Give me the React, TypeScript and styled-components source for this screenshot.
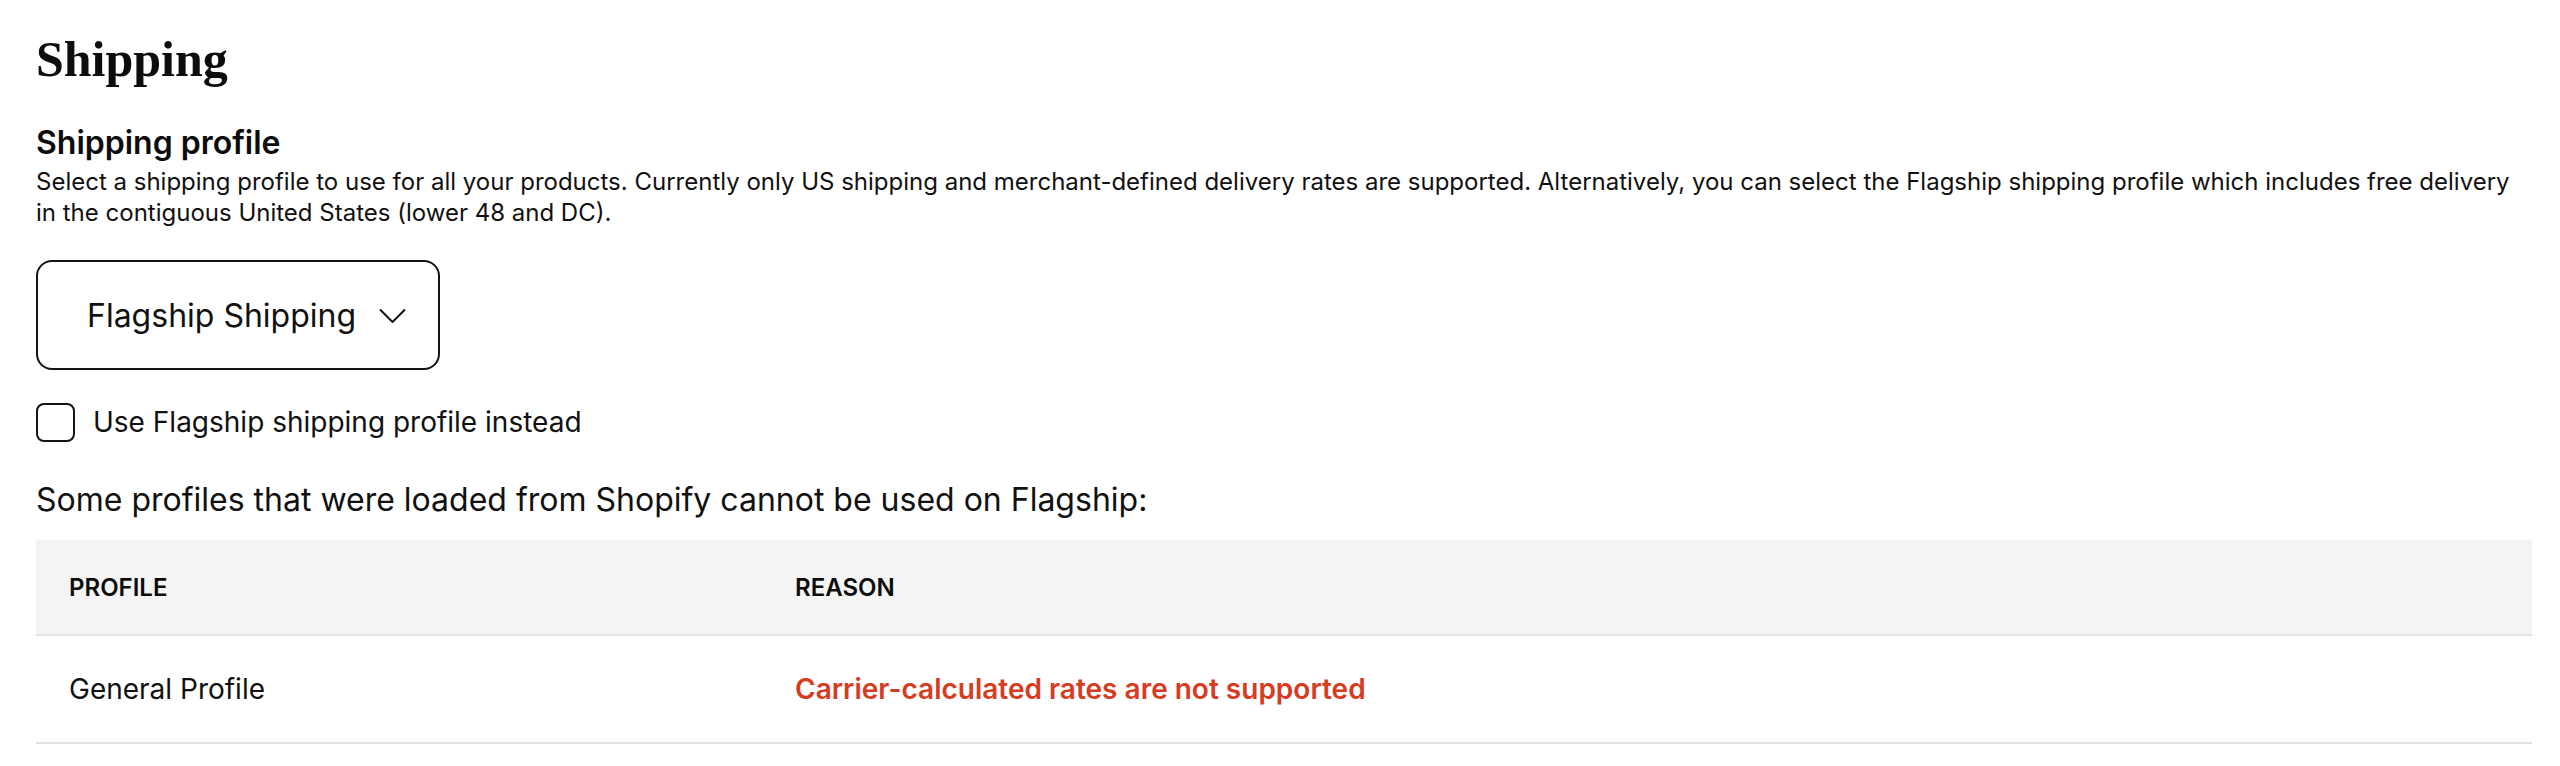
import React from 'react'
import styled, { createGlobalStyle } from 'styled-components'

const GlobalStyle = createGlobalStyle`
  html, body {
    margin: 0;
    padding: 0;
    background: #ffffff;
    color: #111111;
    font-family: Inter, "Noto Sans", "Liberation Sans", sans-serif;
  }
  * {
    box-sizing: border-box;
  }
`

const Page = styled.div`
  padding: 29px 28px 0 36px;
`

const Title = styled.h1`
  margin: 0 0 36px;
  font-family: "Liberation Serif", "DejaVu Serif", serif;
  font-weight: 700;
  font-size: 50px;
  line-height: 60px;
  color: #0d0d0d;
`

const SectionTitle = styled.h2`
  margin: 0 0 5px;
  font-size: 32px;
  line-height: 36px;
  font-weight: 600;
  color: #0d0d0d;
`

const Help = styled.p`
  margin: 0 0 32px;
  font-size: 24px;
  line-height: 31px;
  color: #111111;
`

const SelectButton = styled.button`
  display: inline-flex;
  align-items: center;
  gap: 23px;
  height: 110px;
  padding: 0 32px 0 49px;
  border: 2px solid #141414;
  border-radius: 16px;
  background: #ffffff;
  font-family: inherit;
  font-size: 32px;
  color: #111111;
  cursor: pointer;
`

const Chevron = styled.svg`
  width: 27px;
  height: 15px;
  flex: none;
`

const CheckRow = styled.label`
  display: flex;
  align-items: center;
  gap: 18px;
  margin-top: 33px;
  font-size: 28px;
  line-height: 39px;
  color: #111111;
`

const CheckBox = styled.span`
  width: 39px;
  height: 39px;
  border: 2px solid #141414;
  border-radius: 8px;
  flex: none;
`

const Notice = styled.p`
  margin: 38px 0 20px;
  font-size: 32px;
  line-height: 40px;
  color: #111111;
`

const Table = styled.div`
  display: grid;
  grid-template-columns: 726px 1fr;
`

const HeadCell = styled.div`
  display: flex;
  align-items: center;
  height: 96px;
  padding-left: 33px;
  background: #f4f4f4;
  border-bottom: 2px solid #e3e3e3;
  font-size: 24px;
  font-weight: 600;
  text-transform: uppercase;
  color: #0d0d0d;
`

const Cell = styled.div<{ $error?: boolean }>`
  display: flex;
  align-items: center;
  height: 108px;
  padding-left: 33px;
  border-bottom: 2px solid #e3e3e3;
  font-size: 28px;
  font-weight: ${p => (p.$error ? 600 : 400)};
  color: ${p => (p.$error ? '#d63c1f' : '#111111')};
`

const rows = [
  { profile: 'General Profile', reason: 'Carrier-calculated rates are not supported' },
]

const App = () => {
  return (
    <Page>
      <GlobalStyle />
      <Title>Shipping</Title>
      <SectionTitle>Shipping profile</SectionTitle>
      <Help>
        Select a shipping profile to use for all your products. Currently only US shipping and merchant-defined
        delivery rates are supported. Alternatively, you can select the Flagship shipping profile which includes free
        delivery in the contiguous United States (lower 48 and DC).
      </Help>
      <SelectButton type="button">
        Flagship Shipping
        <Chevron viewBox="0 0 27 15" fill="none">
          <path d="M1 1.5l12.5 12.5L26 1.5" stroke="#111111" strokeWidth="2" />
        </Chevron>
      </SelectButton>
      <CheckRow>
        <CheckBox />
        Use Flagship shipping profile instead
      </CheckRow>
      <Notice>Some profiles that were loaded from Shopify cannot be used on Flagship:</Notice>
      <Table>
        <HeadCell>Profile</HeadCell>
        <HeadCell>Reason</HeadCell>
        {rows.map(r => (
          <React.Fragment key={r.profile}>
            <Cell>{r.profile}</Cell>
            <Cell $error>{r.reason}</Cell>
          </React.Fragment>
        ))}
      </Table>
    </Page>
  )
}

export default App
